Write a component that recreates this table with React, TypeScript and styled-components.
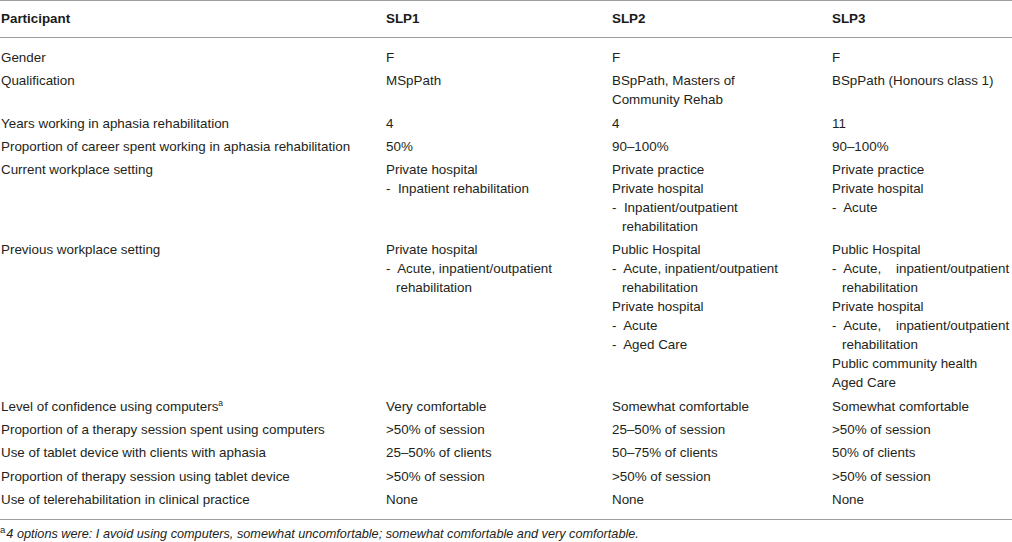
import React from "react";
import styled, { createGlobalStyle } from "styled-components";

const GlobalStyle = createGlobalStyle`
  html, body { margin: 0; padding: 0; background: #ffffff; }
  body { font-family: "Liberation Sans", Arial, Helvetica, sans-serif; color: #231f20; }
`;

const Wrapper = styled.div`
  width: 1012px;
  background: #ffffff;
`;

const Table = styled.table`
  width: 1012px;
  border-collapse: collapse;
  table-layout: fixed;
  font-size: 13.4px;
  line-height: 19px;
`;

const Col = styled.col<{ $w: number }>`
  width: ${(p) => p.$w}px;
`;

const HeadRow = styled.tr`
  border-top: 1px solid #9d9d9d;
  border-bottom: 1px solid #9d9d9d;
`;

const HeadCell = styled.th`
  text-align: left;
  font-weight: bold;
  padding: 8px 0 9px 1px;
  color: #1a1a1a;
`;

const BodyRow = styled.tr<{ $first?: boolean; $last?: boolean }>`
  vertical-align: top;
  border-bottom: ${(p) => (p.$last ? "1px solid #9d9d9d" : "none")};
  td {
    padding-top: ${(p) => (p.$first ? "10px" : "2.15px")};
    padding-bottom: ${(p) => (p.$last ? "10px" : "2.15px")};
  }
`;

const Cell = styled.td`
  padding-left: 1px;
  padding-right: 0;
  white-space: nowrap;
  overflow: visible;
`;

const Line = styled.div<{ $indent?: boolean }>`
  white-space: pre;
  padding-left: ${(p) => (p.$indent ? "10px" : "0")};
`;

const Sup = styled.sup`
  font-size: 8.5px;
  line-height: 0;
  vertical-align: 5px;
`;

const Footnote = styled.p`
  margin: 7px 0 0 0;
  font-size: 12.7px;
  line-height: 15px;
  font-style: italic;
  color: #231f20;
`;

const FootSup = styled.sup`
  font-size: 9.5px;
  line-height: 0;
  vertical-align: 5px;
  font-style: normal;
  margin-right: 1px;
`;

type L = string | { t: string; i?: boolean };

interface Row {
  label: React.ReactNode;
  cells: L[][];
}

const rows: Row[] = [
  { label: "Gender", cells: [["F"], ["F"], ["F"]] },
  {
    label: "Qualification",
    cells: [["MSpPath"], ["BSpPath, Masters of", "Community Rehab"], ["BSpPath (Honours class 1)"]],
  },
  { label: "Years working in aphasia rehabilitation", cells: [["4"], ["4"], ["11"]] },
  {
    label: "Proportion of career spent working in aphasia rehabilitation",
    cells: [["50%"], ["90–100%"], ["90–100%"]],
  },
  {
    label: "Current workplace setting",
    cells: [
      ["Private hospital", "-  Inpatient rehabilitation"],
      ["Private practice", "Private hospital", "-  Inpatient/outpatient", { t: "rehabilitation", i: true }],
      ["Private practice", "Private hospital", "-  Acute"],
    ],
  },
  {
    label: "Previous workplace setting",
    cells: [
      ["Private hospital", "-  Acute, inpatient/outpatient", { t: "rehabilitation", i: true }],
      [
        "Public Hospital",
        "-  Acute, inpatient/outpatient",
        { t: "rehabilitation", i: true },
        "Private hospital",
        "-  Acute",
        "-  Aged Care",
      ],
      [
        "Public Hospital",
        "-  Acute,    inpatient/outpatient",
        { t: "rehabilitation", i: true },
        "Private hospital",
        "-  Acute,    inpatient/outpatient",
        { t: "rehabilitation", i: true },
        "Public community health",
        "Aged Care",
      ],
    ],
  },
  {
    label: (
      <>
        Level of confidence using computers<Sup>a</Sup>
      </>
    ),
    cells: [["Very comfortable"], ["Somewhat comfortable"], ["Somewhat comfortable"]],
  },
  {
    label: "Proportion of a therapy session spent using computers",
    cells: [[">50% of session"], ["25–50% of session"], [">50% of session"]],
  },
  {
    label: "Use of tablet device with clients with aphasia",
    cells: [["25–50% of clients"], ["50–75% of clients"], ["50% of clients"]],
  },
  {
    label: "Proportion of therapy session using tablet device",
    cells: [[">50% of session"], [">50% of session"], [">50% of session"]],
  },
  {
    label: "Use of telerehabilitation in clinical practice",
    cells: [["None"], ["None"], ["None"]],
  },
];

const renderLine = (l: L, k: number) =>
  typeof l === "string" ? (
    <Line key={k}>{l}</Line>
  ) : (
    <Line key={k} $indent={l.i}>
      {l.t}
    </Line>
  );

export default function App() {
  return (
    <Wrapper>
      <GlobalStyle />
      <Table>
        <colgroup>
          <Col $w={385} />
          <Col $w={226} />
          <Col $w={220} />
          <Col $w={181} />
        </colgroup>
        <thead>
          <HeadRow>
            <HeadCell>Participant</HeadCell>
            <HeadCell>SLP1</HeadCell>
            <HeadCell>SLP2</HeadCell>
            <HeadCell>SLP3</HeadCell>
          </HeadRow>
        </thead>
        <tbody>
          {rows.map((r, i) => (
            <BodyRow key={i} $first={i === 0} $last={i === rows.length - 1}>
              <Cell>{r.label}</Cell>
              {r.cells.map((c, j) => (
                <Cell key={j}>{c.map(renderLine)}</Cell>
              ))}
            </BodyRow>
          ))}
        </tbody>
      </Table>
      <Footnote>
        <FootSup>a</FootSup>4 options were: I avoid using computers, somewhat uncomfortable; somewhat comfortable and
        very comfortable.
      </Footnote>
    </Wrapper>
  );
}
